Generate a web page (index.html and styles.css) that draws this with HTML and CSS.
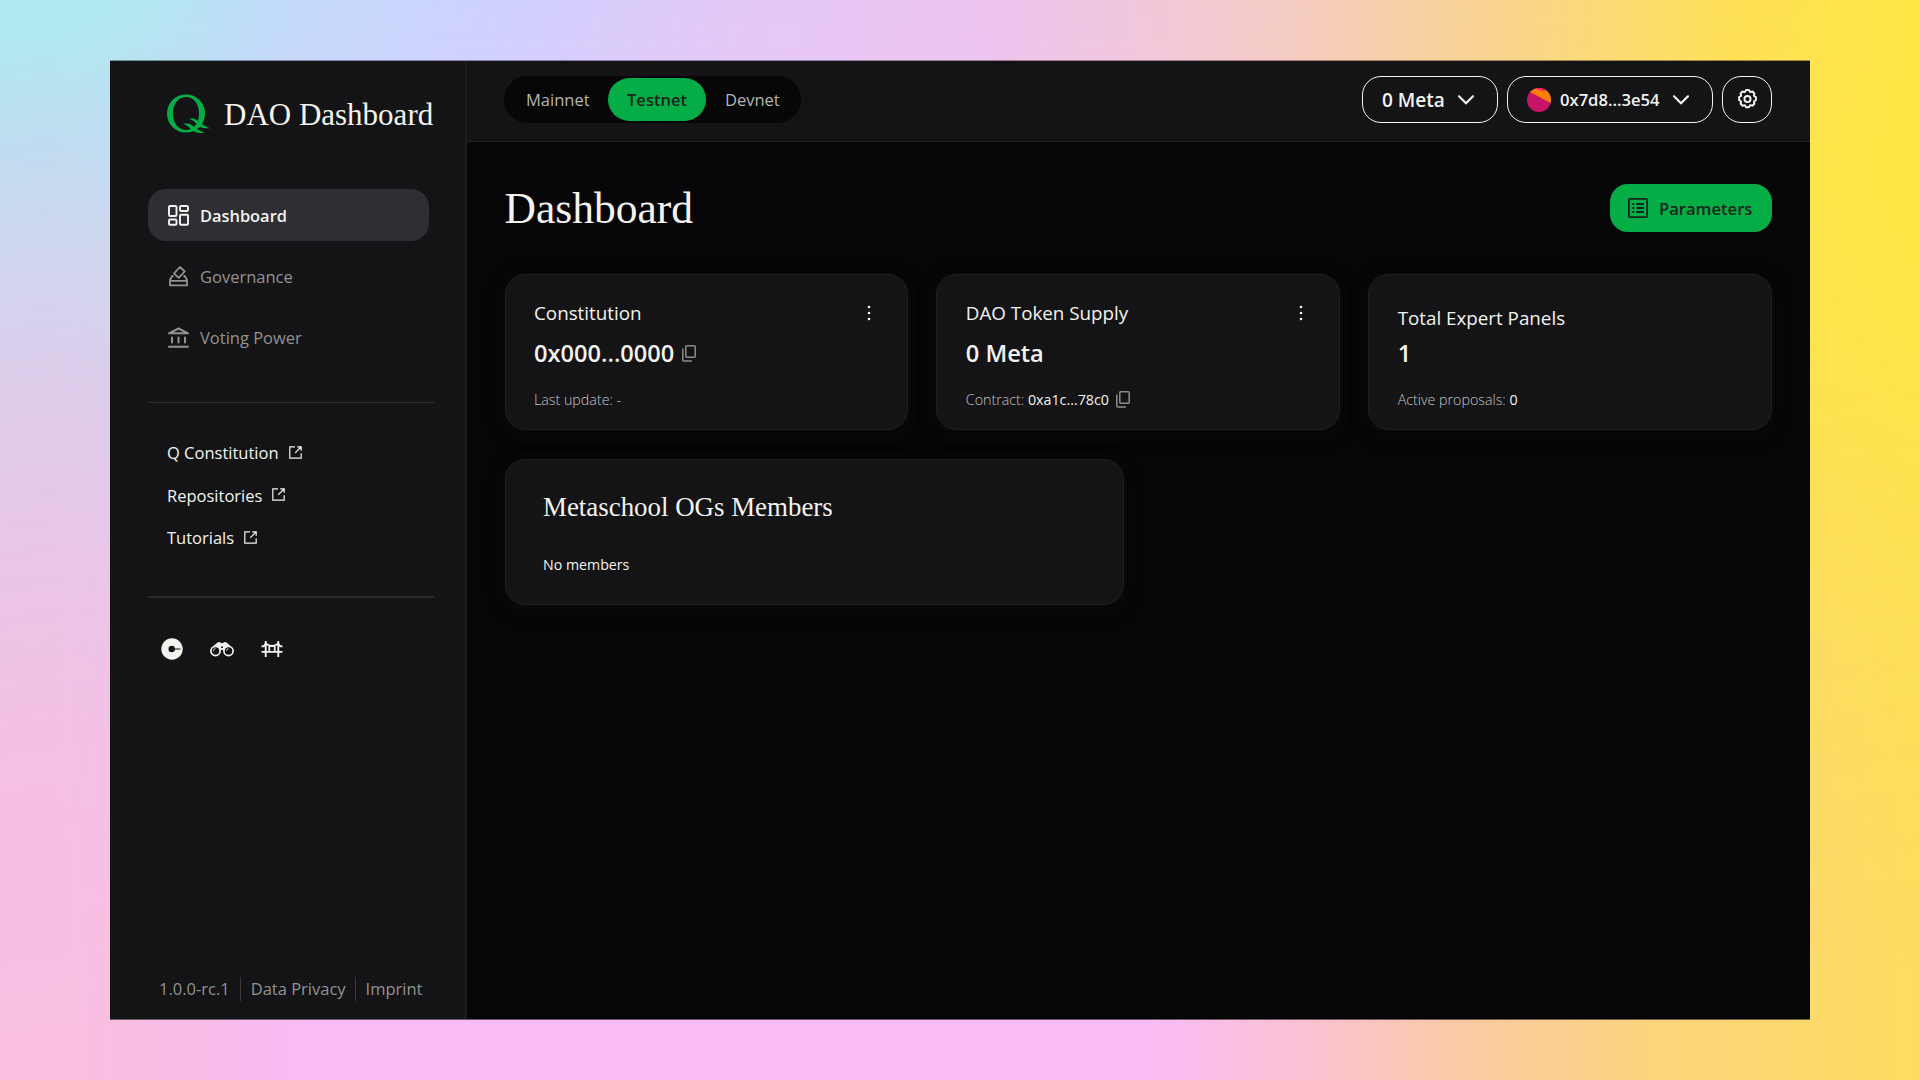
FILE: index.html
```html
<!DOCTYPE html>
<html lang="en">
<head>
<meta charset="utf-8">
<title>DAO Dashboard</title>
<link rel="stylesheet" href="styles.css">
</head>
<body>
<svg class="defs" width="0" height="0" aria-hidden="true">
  <symbol id="external" viewBox="0 0 13 13"><path d="M6 .8H.8v11.4h11.4V7.2M8.2.8h4v4M12 1 6.2 6.8" fill="none" stroke="currentColor" stroke-width="1.2"/></symbol>
  <symbol id="copy" viewBox="0 0 14 17"><path d="M4.7.8h7.6q.9 0 .9.9v9.6q0 .9-.9.9H4.7q-.9 0-.9-.9V1.700q0-.9.9-.9ZM.8 3.600v11.500q0 .9.9.9h8.200" fill="none" stroke="currentColor" stroke-width="1.5"/></symbol>
  <symbol id="chevron" viewBox="0 0 16 10"><path d="m1 1.300 7 7 7-7" fill="none" stroke="currentColor" stroke-width="2.200" stroke-linecap="round"/></symbol>
  <symbol id="dots" viewBox="0 0 4 16"><circle cx="2" cy="2" r="1.300"/><circle cx="2" cy="8" r="1.300"/><circle cx="2" cy="14" r="1.300"/></symbol>
</svg>
<div class="app">
  <aside class="sidebar">
    <div class="brand">
      <svg class="logo" viewBox="0 0 43 40"><path fill-rule="evenodd" d="M19 .5C29 .5 38 8 38 19.500S29 38.500 19 38.500 0 31 0 19.500 9 .5 19 .5Zm0 2.500C11 3 6 10 6 19.500S11 36 19 36s13-7 13-16.500S27 3 19 3Z"/><path d="M22 24.500h4.500c3 0 7 6 16.500 9.800h-4.500C31 34 29 27 22 24.500ZM16 29.500h5c3.500 0 7 6 17 9.500h-5C25 39 23 32 16 29.500Z"/></svg>
      <span class="brand-name">DAO Dashboard</span>
    </div>
    <nav class="nav">
      <a class="nav-item active"><svg class="nav-icon" viewBox="0 0 21 21"><g fill="none" stroke="currentColor" stroke-width="1.900"><rect x="1" y="1" width="7.500" height="10" rx="1"/><rect x="12" y="1" width="8" height="5" rx="1"/><rect x="1" y="14.500" width="7.500" height="5.200" rx="1"/><rect x="12" y="9.800" width="8" height="9.900" rx="1"/></g></svg>Dashboard</a>
      <a class="nav-item"><svg class="nav-icon" viewBox="0 0 21 21"><g fill="none" stroke="currentColor" stroke-width="1.800" stroke-linejoin="round"><path d="m12 1 4.700 4.500-6 6.300L6 7.300ZM5.500 10H4.200L2 14v5.400h17V14l-2.200-4h-1.300M2 14.800h17"/></g></svg>Governance</a>
      <a class="nav-item"><svg class="nav-icon" viewBox="0 0 21 21"><g fill="none" stroke="currentColor" stroke-width="2" stroke-linecap="round" stroke-linejoin="round"><path d="M1 6.300h19L10.500 1.500ZM1 19.800h19M4 10.500v5M10.500 10.500v5M17 10.500v5"/></g></svg>Voting Power</a>
    </nav>
    <div class="links">
      <a>Q Constitution<svg class="ext"><use href="#external"/></svg></a>
      <a>Repositories<svg class="ext"><use href="#external"/></svg></a>
      <a>Tutorials<svg class="ext"><use href="#external"/></svg></a>
    </div>
    <div class="socials">
      <svg width="22" height="22" viewBox="0 0 22 22"><circle cx="11" cy="11" r="10.700" fill="currentColor"/><circle cx="10.700" cy="11" r="3.200" fill="#141416"/><path d="M11 11h8.500" stroke="#141416" stroke-width="1"/></svg>
      <svg width="24" height="16" viewBox="0 0 24 16"><g fill="none" stroke="currentColor" stroke-width="1.700"><circle cx="5.500" cy="10" r="4.600"/><circle cx="18.500" cy="10" r="4.600"/><path d="M3.400 9.700q.3-1.800 2-2M16.400 9.700q.3-1.800 2-2" stroke-width="1"/></g><path d="M3 5.500 7.500 1.500q2-1 3.500.4l1 .4 1-.4q1.500-1.400 3.500-.4l4.500 4Q16 4 13.600 9h-3.200Q8 4 3 5.500Z" fill="currentColor"/><circle cx="12" cy="6.200" r="1" fill="#141416"/></svg>
      <svg width="22" height="16" viewBox="0 0 22 16"><g fill="none" stroke="currentColor" stroke-width="1.700"><path d="M.5 10.900h21M4.700 0v16M17.300 0v16" stroke-width="1.900"/><path d="M.5 5.500Q4 5.500 4.700 2.500Q11 7.500 17.300 2.500Q18 5.500 21.500 5.500M8.300 5v5.500M13.700 5v5.500"/></g></svg>
    </div>
    <footer class="legal"><span>1.0.0-rc.1</span><span>Data Privacy</span><span>Imprint</span></footer>
  </aside>
  <div class="content">
    <header class="topbar">
      <div class="switch"><span class="mainnet">Mainnet</span><span class="on">Testnet</span><span class="devnet">Devnet</span></div>
      <div class="actions">
        <button class="outline balance">0 Meta<svg class="chev"><use href="#chevron"/></svg></button>
        <button class="outline account"><svg class="avatar" viewBox="0 0 24 24"><defs><clipPath id="round"><circle cx="12" cy="12" r="12"/></clipPath></defs><g clip-path="url(#round)"><path fill="#c81466" d="M0 0h24v24H0z"/><path fill="#f97f03" d="m2 3.500 22 11.800V0H4Z"/><path fill="#fa167c" d="M8 .8 17.500 3 18 0H8Z"/></g></svg><span class="address">0x7d8...3e54</span><svg class="chev"><use href="#chevron"/></svg></button>
        <button class="outline gear"><svg width="21" height="21" viewBox="0 0 24 24"><g fill="none" stroke="currentColor" stroke-width="2.200" stroke-linejoin="round"><path d="m9.200 3.200 1.200-2h3.200l1.200 2 .6.300 2.300-.6 2.200 2.200-.6 2.300.3.600 2 1.200v3.600l-2 1.200-.3.600.6 2.300-2.200 2.200-2.300-.6-.6.300-1.200 2h-3.200l-1.200-2-.6-.300-2.300.6-2.200-2.200.6-2.300-.3-.6-2-1.200V9.200l2-1.200.3-.6-.6-2.300 2.200-2.200 2.300.6Z"/><circle cx="12" cy="11.500" r="3.500"/></g></svg></button>
      </div>
    </header>
    <main class="main">
      <div class="heading">
        <h1>Dashboard</h1>
        <button class="params"><svg width="20" height="20" viewBox="0 0 20 20"><g fill="none" stroke="currentColor" stroke-width="1.800"><rect x=".9" y=".9" width="18.200" height="18.200" rx="1"/><path d="M4.300 6h2M8.500 6H16M4.300 10h2M8.500 10H16M4.300 14h2M8.500 14H16"/></g></svg>Parameters</button>
      </div>
      <div class="cards">
        <section class="card">
          <div class="card-top"><h2>Constitution</h2><svg class="kebab"><use href="#dots"/></svg></div>
          <div class="value">0x000...0000<svg class="copy"><use href="#copy"/></svg></div>
          <div class="note">Last update: -</div>
        </section>
        <section class="card">
          <div class="card-top"><h2>DAO Token Supply</h2><svg class="kebab"><use href="#dots"/></svg></div>
          <div class="value">0 Meta</div>
          <div class="note">Contract: <b>0xa1c...78c0</b><svg class="copy"><use href="#copy"/></svg></div>
        </section>
        <section class="card plain">
          <div class="card-top"><h2>Total Expert Panels</h2></div>
          <div class="value">1</div>
          <div class="note">Active proposals: <b>0</b></div>
        </section>
      </div>
      <section class="members">
        <h2>Metaschool OGs Members</h2>
        <p>No members</p>
      </section>
    </main>
  </div>
</div>
</body>
</html>
```
FILE: styles.css
```css
* { box-sizing: border-box; }
body {
  margin: 0;
  width: 1920px;
  height: 1080px;
  padding: 61px 110px;
  overflow: hidden;
  position: relative;
  font-family: "Open Sans", "Noto Sans", sans-serif;
  font-size: 16.500px;
  color: #f3f3ef;
  background: linear-gradient(90deg, #f8bce0 0, #f8bbf3 300px, #f9bbf6 1140px, #fac2d2 1310px, #fbcaa2 1470px, #fcd47d 1650px, #fddd60 1920px);
}
body::before,
body::after {
  content: "";
  position: absolute;
  inset: 0;
  z-index: -1;
}
body::before {
  background: radial-gradient(ellipse 520px 520px at 1920px 560px, #ffec38 0 35%, #ffec3800 100%), linear-gradient(96deg, #b0ebee 0, #c2dbfb 280px, #d1d0fe 520px, #e4c8f7 740px, #edc4ee 1000px, #f4cacb 1240px, #f9d491 1480px, #fee154 1740px, #ffe744 1920px);
  -webkit-mask-image: linear-gradient(#000 0, #000000dd 15%, #0008 35%, #0003 60%, transparent 90%);
  mask-image: linear-gradient(#000 0, #000000dd 15%, #0008 35%, #0003 60%, transparent 90%);
}
body::after {
  width: 260px;
  background: linear-gradient(172deg, #b0eaf0 30px, #c0dcf0 150px, #d3d4ee 280px, #dfcbea 410px, #eac5e7 570px, #f4c0e4 750px, #f9bfe0 1100px);
  -webkit-mask-image: linear-gradient(90deg, #000 60px, transparent);
  mask-image: linear-gradient(90deg, #000 60px, transparent);
}
.defs { position: absolute; }
svg { display: block; flex: none; }
h1, h2, p { margin: 0; font-weight: 400; }
h1, .brand-name, .members h2 { font-family: "Liberation Serif", serif; }
button { font: inherit; color: inherit; background: none; border: 0; padding: 0; display: flex; align-items: center; }
.app {
  position: relative;
  width: 1700px;
  height: 958px;
  display: flex;
  background: #060608;
  box-shadow: 0 -1px #14141666, 0 1px #14141699;
}
.sidebar {
  width: 357px;
  padding: 33px 31px 0 38px;
  background: #141416;
  border-right: 2px solid #1c1c1f;
  display: flex;
  flex-direction: column;
}
.brand { height: 40px; margin: 0 -10px 0 19px; display: flex; align-items: center; gap: 14px; }
.logo { width: 43px; height: 40px; fill: #05ad46; }
.brand-name { font-size: 31px; line-height: 40px; white-space: nowrap; padding-top: 1px; }
.nav { display: flex; flex-direction: column; gap: 9px; margin-top: 55px; padding-bottom: 38px; border-bottom: 1px solid #2e2e31; }
.nav-item { height: 52.400px; width: 281px; padding-left: 20px; display: flex; align-items: center; gap: 11px; border-radius: 18px; color: #929292; }
.nav-item.active { background: #2f2e34; color: #f3f3ef; font-weight: 600; font-size: 16.400px; }
.nav-icon { width: 21px; height: 21px; }
.links { display: flex; flex-direction: column; gap: 20.600px; padding: 39px 0 47px 19px; border-bottom: 2px solid #29292c; }
.links a { display: flex; align-items: center; gap: 10px; line-height: 22px; }
.ext { width: 13px; height: 13px; margin-top: -2px; }
.socials { display: flex; align-items: center; gap: 27px; padding: 40px 0 0 13px; }
.legal { margin-top: auto; margin-bottom: 18px; padding-left: 11px; display: flex; line-height: 24px; color: #929292; white-space: nowrap; }
.legal span + span { margin-left: 10px; padding-left: 10px; border-left: 1px solid #3b3b3e; }
.legal span + span + span { margin-left: 9px; }
.content { flex: 1; display: flex; flex-direction: column; }
.topbar { height: 81px; padding: 0 38px 3px 37px; display: flex; align-items: center; justify-content: space-between; background: #141416; border-bottom: 1px solid #232326; }
.switch { width: 297px; height: 47px; border-radius: 24px; background: #070708; display: flex; align-items: center; color: #b4b4b2; }
.mainnet { width: 104px; padding-left: 22px; }
.on { width: 98px; height: 43px; line-height: 44px; border-radius: 22px; background: #05ad46; color: #17251c; font-weight: 600; font-size: 16.500px; text-align: center; }
.devnet { padding-left: 19px; }
.actions { display: flex; gap: 9px; }
.outline { height: 47px; border: 1.500px solid #f3f3ef; border-radius: 19px; font-weight: 600; font-size: 16.600px; }
.balance { width: 136px; padding-left: 19px; justify-content: space-between; padding-right: 23px; font-size: 19px; }
.account { width: 206px; padding: 0 23px 0 19px; }
.address { margin-left: 9px; margin-right: auto; }
.chev { width: 16px; height: 10px; }
.avatar { width: 24px; height: 24px; }
.gear { width: 50px; justify-content: center; }
.main { padding: 42px 38px 0 37.500px; }
.heading { display: flex; justify-content: space-between; height: 49px; }
h1 { font-size: 43.500px; line-height: 49px; }
.params { width: 162px; height: 48px; padding-left: 18px; gap: 11px; border-radius: 18px; background: #05ad46; color: #17251c; font-weight: 600; font-size: 16.600px; }
.cards { display: grid; grid-template-columns: repeat(3, 1fr); gap: 28px; margin-top: 41px; }
.card, .members { background: #141416; border: 1px solid #1f1f22; border-radius: 20px; box-shadow: 0 4px 16px #0b0b0d; }
.card { height: 156px; padding: 25px 28px 0 28.500px; }
.card-top { display: flex; justify-content: space-between; align-items: center; height: 26px; }
.card-top h2 { font-size: 18.800px; line-height: 26px; }
.kebab { width: 4px; height: 16px; margin-right: 8px; fill: currentColor; }
.value { display: flex; align-items: center; gap: 8px; height: 34px; margin-top: 10px; font-size: 23.600px; font-weight: 600; }
.copy { width: 14px; height: 17px; color: #8c8c8c; }
.note { display: flex; align-items: center; height: 20px; margin-top: 19px; font-size: 14.250px; font-weight: 300; color: #c4c4c1; white-space: pre; }
.note b { font-weight: 400; color: #f3f3ef; }
.note .copy { margin-left: 7px; }
.plain { padding-top: 30px; }
.plain .value { margin-top: 5px; }
.members { width: 619.500px; height: 146px; margin-top: 29px; padding: 31px 37.500px; }
.members h2 { font-size: 26.900px; line-height: 32px; }
.members p { margin-top: 32px; font-size: 14.200px; line-height: 20px; }
```
